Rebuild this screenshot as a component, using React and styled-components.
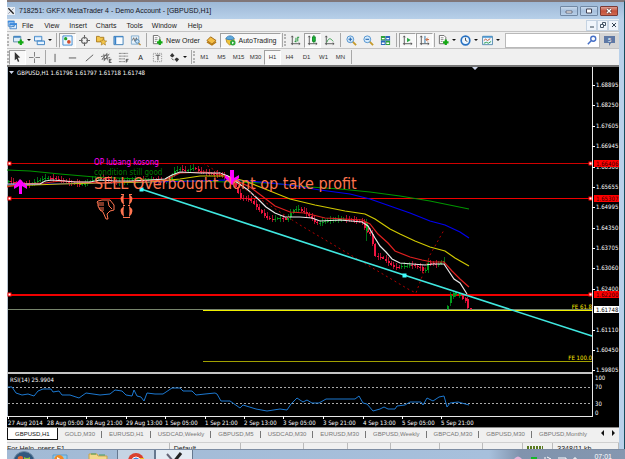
import React from "react";
import styled, { createGlobalStyle } from "styled-components";

const GlobalStyle = createGlobalStyle`
  * {
    box-sizing: border-box;
  }
  body {
    margin: 0;
    background: #fff;
    overflow: hidden;
    font-family: "Liberation Sans", Arial, sans-serif;
    font-size: 7px;
    color: #1b1b1b;
  }
  button {
    font: inherit;
    color: inherit;
    background: none;
    border: 0;
    padding: 0;
    cursor: pointer;
  }
`;
const Desktop = styled.div`
  height: 100vh;
  padding-left: 7px;
  display: flex;
  flex-direction: column;
  overflow: hidden;
`;
const Frame = styled.div`
  flex: none;
  border-top: 2px solid #807678;
  border-right: 1px solid #174c5c;
  background: linear-gradient(#9db8d6, #b9d1ea 18px);
`;
const TitleBar = styled.header`
  height: 17px;
  display: flex;
  align-items: center;
  gap: 4px;
  padding: 0 6px 0 0;
`;
const TitleText = styled.h1`
  flex: 1;
  margin: 0;
  font-size: 7px;
  font-weight: normal;
  white-space: nowrap;
  color: #14141c;
`;
const WindowButtons = styled.div`
  display: flex;
  gap: 2px;
`;
const WindowButton = styled.button`
  width: 18px;
  height: 10px;
  display: grid;
  place-items: center;
  border: 1px solid ${(props) => (props.$close ? "#7c3a35" : "#7188a4")};
  border-radius: 1px;
  background: ${(props) =>
    props.$close
      ? "linear-gradient(#dda094, #c4503a 50%, #cf6a50)"
      : "linear-gradient(#c9daed, #a6bfdc 50%, #b8cfe8)"};
`;
const Client = styled.div`
  margin-right: 5px;
  background: #f0f0f0;
`;
const MenuBar = styled.nav`
  height: 12px;
  display: flex;
  align-items: center;
`;
const MenuItem = styled.button`
  margin-right: ${(props) => props.$gap}px;
`;
const MdiButtons = styled.div`
  display: flex;
  margin-left: auto;
`;
const MdiButton = styled.button`
  width: 11px;
  height: 11px;
  display: grid;
  place-items: center;
  border: 1px solid #c5d3e2;
  background: #f0f5fb;
`;
const Toolbar = styled.div`
  height: 17px;
  display: flex;
  align-items: center;
  border-top: 1px solid #c4c4c4;
  white-space: nowrap;
`;
const Grip = styled.span`
  flex: none;
  width: ${(props) => props.$width}px;
  height: 12px;
  border-left: 2px dotted #b4b4b4;
`;
const Separator = styled.span`
  flex: none;
  width: ${(props) => props.$width || 5}px;
  height: 14px;
  background: linear-gradient(#a8a8a8, #a8a8a8) center / 1px 100% no-repeat;
`;
const ToolButton = styled.button`
  flex: none;
  width: ${(props) => props.$width || 17}px;
  height: 15px;
  display: flex;
  align-items: center;
  justify-content: center;
  gap: 3px;
  border: 1px solid transparent;
  ${(props) =>
    props.$pressed &&
    `
    background: #f8f8f8;
    border-color: #a0a0a0 #fff #fff #a0a0a0;
  `}
`;
const Caret = styled.span`
  border: 2px solid transparent;
  border-top-color: #111;
  border-bottom: 0;
`;
const TimeframeButton = styled(ToolButton)`
  font-size: 6px;
  color: #333;
`;
const SearchBox = styled.label`
  flex: 1;
  min-width: 0;
  height: 15px;
  display: flex;
  align-items: center;
  margin-left: 3px;
  padding-right: 2px;
  border: 1px solid #b9b9b9;
  background: #fff;
`;
const SearchInput = styled.input`
  flex: 1;
  min-width: 0;
  border: 0;
  outline: 0;
  padding: 0 3px;
  font: inherit;
  background: transparent;
`;
const ChatButton = styled(ToolButton)`
  background: #d5d5d5;
`;
const ChartFrame = styled.main`
  border-top: 2px solid #777;
  border-bottom: 1px solid #8a8a8a;
  background: #000;
`;
const ChartSvg = styled.svg`
  display: block;
  width: 100%;
  height: auto;
  font-family: "DejaVu Sans Condensed", "Noto Sans", sans-serif;
  font-size: 6px;
`;
const Tabs = styled.div`
  height: 14px;
  display: flex;
  align-items: flex-start;
  overflow: hidden;
  white-space: nowrap;
  font-size: 6px;
`;
const Tab = styled.button`
  flex: none;
  height: 12px;
  padding: 0 7px;
  ${(props) =>
    props.$active
      ? `
    color: #111;
    background: #fff;
    border: 1px solid #111;
    border-top: 0;
  `
      : `
    color: #777;
    background: linear-gradient(#777, #777) right center / 1px 7px no-repeat;
    &:last-of-type { background: none; }
  `}
`;
const TabArrows = styled.span`
  margin-left: auto;
  padding: 2px 4px 0 0;
`;
const StatusBar = styled.footer`
  height: 7px;
  display: flex;
  overflow: hidden;
  line-height: 8px;
  border-top: 1px solid #d0d0d0;
`;
const StatusCell = styled.span`
  flex: ${(props) => `${props.$size} ${props.$size} ${props.$size}px`};
  min-width: 0;
  padding: 2px 0 0 4px;
  border-right: 1px solid #bbb;
  white-space: nowrap;
  &:first-child {
    padding-left: 0;
  }
`;
const Taskbar = styled.div`
  flex: 1;
  min-height: 0;
  display: flex;
  align-items: flex-start;
  overflow: hidden;
  border-top: 1px solid #7d8da3;
  background: linear-gradient(90deg, #a2bad5, #a7c0dc 78%, #8093ad 83%, #8597b0);
`;
const TaskButton = styled.button`
  flex: none;
  width: ${(props) => props.$width || 38}px;
  height: 20px;
  display: flex;
  justify-content: center;
  ${(props) =>
    props.$open &&
    `
    border: 1px solid #66788f;
    border-top: 0;
    background: ${props.$active ? "#e3ebf3" : "#c5d4e4"};
  `}
`;
const Tray = styled.div`
  margin-left: auto;
  padding-right: 13px;
  display: flex;
  gap: 13px;
  color: #fff;
  line-height: 8px;
`;
const Clock = styled.time`
  padding-top: 3px;
`;

const svgProps = { viewBox: "0 0 12 12", fill: "none", "aria-hidden": true };

function Icon({ children, size = 12 }) {
  return (
    <svg {...svgProps} width={size} height={size}>
      {children}
    </svg>
  );
}

const plus = <path d="M8.5 5v6M5.5 8h6" stroke="#13a813" strokeWidth="2.4" />;
const axes = <path d="M2.5 1v10M1 9.5h10M1.5 2.5l1-1.5 1 1.5M9.5 8.5l1.5 1-1.5 1" stroke="#555" />;
const gold = { fill: "#f3c64d", stroke: "#a97a1c" };

const icons = {
  logo: (
    <>
      <path d="M0 0h12v12H0z" fill="#e9eef4" />
      <path d="M2 2l8 8" stroke="#222" strokeWidth="2" />
      <path d="M10 2L2 10" stroke="#667" />
    </>
  ),
  windows: (
    <>
      <path d="M1.5 1.5h7v6h-7zM3.5 4.5h8v6h-8z" fill="#dcecff" stroke="#3c7fc4" />
      <path d="M1 2h8M3 5h9" stroke="#3c8be0" strokeWidth="2" />
      <path d="M5 9l2-2 1 1 2-2" stroke="#3579b8" />
    </>
  ),
  newChart: (
    <>
      <path d="M.5 1.5h8v6h-8z" fill="#dcecf8" stroke="#5588a4" />
      <path d="M1 2h7" stroke="#4386c4" strokeWidth="2" />
      {plus}
    </>
  ),
  profiles: (
    <>
      <path d="M.5 1.5h8v5h-8zM3.5 6.5h8v4h-8z" fill="#e7f3ff" stroke="#397ebd" />
      <path d="M1 2h7M4 7h7" stroke="#74aee3" />
    </>
  ),
  market: (
    <>
      <path d="M1 1h10v10H1z" fill="#eef8ff" stroke="#3b86ce" />
      <circle cx="4" cy="4" r="1.8" fill="#21a32b" />
      <circle cx="7.5" cy="7.5" r="2" fill="#d14b2c" />
    </>
  ),
  target: (
    <>
      <circle cx="6" cy="6" r="3.3" stroke="#666" strokeWidth="1.2" />
      <path d="M6 0v4M6 8v4M0 6h4M8 6h4" stroke="#666" strokeWidth="1.2" />
    </>
  ),
  folderStar: (
    <>
      <path d="M.5 1.5h3l1 1h4v5h-8z" {...gold} />
      <path d="M8 4l1.1 2.4 2.6.2-2 1.8.7 2.6L8 9.6 5.6 11l.7-2.6-2-1.8 2.6-.2z" {...gold} strokeWidth=".7" />
    </>
  ),
  dataWindow: (
    <>
      <path d="M1 1.5h10v9H1z" fill="#f9fcff" stroke="#3b7db6" />
      <path d="M2.5 2v8" stroke="#3982c8" strokeWidth="2" />
      <path d="M1 2h10" stroke="#3982c8" />
    </>
  ),
  tester: (
    <>
      <path d="M1.5 1h8v9h-8z" fill="#e7f2fb" stroke="#7faacd" />
      <path d="M2.5 6L4 3l1.5 4L7 3l1 3" stroke="#666" />
      <circle cx="8" cy="7" r="2" fill="#cce5fa" stroke="#4b83ad" />
      <path d="M9.5 9l2 2" stroke="#b78328" strokeWidth="1.4" />
    </>
  ),
  newOrder: (
    <>
      <path d="M1.5.5h5l2 2v7h-7z" fill="#fff" stroke="#666" />
      <path d="M3 3h3M3 5h3M3 7h2" stroke="#888" />
      {plus}
    </>
  ),
  book: (
    <>
      <path d="M1 6l4-4 6 4-4.500 4z" fill="#f4be44" stroke="#9c6510" />
      <path d="M1 7.500l5.500 3.500L11 7.500" stroke="#b7790f" strokeWidth="1.4" />
    </>
  ),
  auto: (
    <>
      <path d="M1 4h9l-1 5-4 2-3-3z" fill="#f0c53b" stroke="#bc8d21" />
      <path d="M1 4c1-4 8-4 9 0-2 1.500-7 1.500-9 0z" fill="#5eaadd" stroke="#3c80b8" />
      <circle cx="8.500" cy="8.500" r="3" fill="#2da83b" />
      <path d="M7.700 7l2.300 1.500L7.700 10z" fill="#fff" />
    </>
  ),
  bars: (
    <>
      {axes}
      <path d="M6.500 3v5M5 7h1.500M8.500 2v5M8.500 2.500H10" stroke="#178c2e" />
    </>
  ),
  candles: (
    <>
      {axes}
      <path d="M7.500 0v9" stroke="#118327" />
      <path d="M6 2h3v5H6z" fill="#18b535" stroke="#118327" />
    </>
  ),
  line: (
    <>
      {axes}
      <path d="M3 8c2-5 4-5 7-1" stroke="#2f9a44" />
    </>
  ),
  zoomIn: (
    <>
      <path d="M7 7l4 4" stroke="#c69a2a" strokeWidth="2" />
      <circle cx="4.700" cy="4.700" r="3.700" fill="#d7ebfb" stroke="#4b8fce" />
      <path d="M2.700 4.700h4M4.700 2.700v4" stroke="#2468b0" strokeWidth="1.200" />
    </>
  ),
  zoomOut: (
    <>
      <path d="M7 7l4 4" stroke="#c69a2a" strokeWidth="2" />
      <circle cx="4.700" cy="4.700" r="3.700" fill="#d7ebfb" stroke="#4b8fce" />
      <path d="M2.700 4.700h4" stroke="#2468b0" strokeWidth="1.200" />
    </>
  ),
  tile: (
    <>
      <path d="M1 1h5v5H1zM6 6h5v5H6z" fill="#2fa23a" />
      <path d="M6 1h5v5H6zM1 6h5v5H1z" fill="#2d68bd" />
      <path d="M2 4h3M7 4h3M2 9h3M7 9h3" stroke="#fff" strokeWidth="1.500" />
    </>
  ),
  scroll: (
    <>
      {axes}
      <path d="M5.500 3l4 2.500-4 2.500z" fill="#26a640" />
    </>
  ),
  shift: (
    <>
      {axes}
      <path d="M6.500 1v8" stroke="#246d9f" />
      <path d="M11 5H8M9.500 3L7.500 5l2 2" stroke="#c05020" />
    </>
  ),
  period: (
    <>
      <circle cx="6" cy="6" r="4.700" fill="#eef7ff" stroke="#2872c3" strokeWidth="1.800" />
      <path d="M6 3v3l2 1" stroke="#444" />
    </>
  ),
  template: (
    <>
      <path d="M.500 1.500h11v9H.500z" fill="#e8f5ff" stroke="#5689ad" />
      <path d="M1 2h10" stroke="#4e95cc" strokeWidth="2" />
      <path d="M2 6l2-1.500L6 6l3-2" stroke="#c65730" />
      <path d="M2 9l3-1 2 1 3-2" stroke="#259b45" />
    </>
  ),
  search: (
    <>
      <circle cx="7.500" cy="4.500" r="3" stroke="#456fc6" strokeWidth="1.600" />
      <path d="M5 7l-4 4" stroke="#456fc6" strokeWidth="1.800" />
    </>
  ),
  pointer: <path d="M3 0l6 6-2.700.300L8 10l-1.500.800L5 7.300 3 9z" fill="#333" />,
  cross: <path d="M6 0v5M6 7v5M0 6h5M7 6h5" stroke="#777" />,
  vline: <path d="M5.500 2v9" stroke="#555" />,
  hline: <path d="M2 6.500h8" stroke="#555" />,
  trend: <path d="M2 10l8-7" stroke="#555" />,
  channel: (
    <>
      <path d="M1 8l6-7M3 10l6-8M0 5l8-2M1 8l9-2M3 2l1 7M6 2l1 7" stroke="#555" strokeWidth=".800" />
      <path d="M11.500 8H9v3.500h2.500M9 9.700h2" stroke="#222" strokeWidth=".800" />
    </>
  ),
  fibo: (
    <>
      <path d="M1 1.500h10M1 4.500h10M1 7.500h7M1 10.500h7" stroke="#666" strokeDasharray="1 .4" />
      <path d="M11.500 8H9v3.500M9 9.700h2" stroke="#222" strokeWidth=".800" />
    </>
  ),
  label: (
    <>
      <path d="M1.500 1.500h9v9h-9z" stroke="#888" strokeDasharray="1 1" />
      <path d="M4 3.500h5M6.500 3.500V9" stroke="#444" />
    </>
  ),
  arrows: (
    <>
      <path d="M1 4l2.500-3L6 4 3.500 6z" fill="#333" />
      <path d="M6 8l2.500-2L11 8l-2.500 3z" fill="#333" />
      <path d="M3 7l2 2" stroke="#333" />
    </>
  ),
};

const PRICE_LABELS = [
  ["1.68895", 85], ["1.68250", 105], ["1.67605", 126], ["1.66945", 146],
  ["1.66300", 167], ["1.65655", 187], ["1.64995", 207], ["1.64350", 228],
  ["1.63705", 248], ["1.63060", 268], ["1.62400", 289], ["1.61110", 330],
  ["1.60450", 350], ["1.59805", 370],
];
const DATES = [
  ["27 Aug 2014", 8], ["28 Aug 05:00", 47], ["28 Aug 21:00", 86],
  ["29 Aug 13:00", 126], ["1 Sep 05:00", 165], ["1 Sep 21:00", 205],
  ["2 Sep 13:00", 244], ["3 Sep 05:00", 283], ["3 Sep 21:00", 323],
  ["4 Sep 13:00", 363], ["5 Sep 05:00", 402], ["5 Sep 21:00", 441],
];
const LINES = [
  ["#009400", "7,170 30,171 60,174 95,177 140,179 190,181 230,182 270,183 310,187 340,189 370,192 400,196 430,201 469,209"],
  ["#0000f0", "7,185 50,184 100,183 150,182 200,181 225,180 250,181 290,185 320,190 350,194 370,199 390,206 410,213 430,221 445,225 460,232 469,238"],
  ["#d0c800", "7,186 60,184 100,183 150,182 180,179 200,176 225,176 245,181 265,189 290,199 315,205 345,211 365,214 375,219 390,229 400,234 415,241 430,247 445,251 455,258 469,266"],
  ["#e02020", "7,187 20,184 45,183 60,181 100,183 165,180 180,173 205,172 225,175 235,180 250,187 262,196 275,206 290,212 305,213 325,218 345,219 362,220 370,224 378,234 388,243 395,251 410,257 422,260 432,262 444,262 452,271 460,279 469,287"],
  ["#e8e8e8", "7,184 40,184 45,181 52,180 65,181 75,182 90,182 100,180 115,181 130,181 150,180 165,179 172,175 180,172 200,173 220,173 228,176 238,183 248,190 258,199 266,207 275,213 285,217 300,217 312,218 320,221 340,220 362,222 368,226 375,238 380,246 386,252 392,259 400,263 412,264 425,265 433,264 444,264 448,270 454,279 460,283 467,294"],
];
const RSI =
  "8,387 12,387 16,393 22,395 28,394 34,396 38,391 43,389 51,389 53,392 59,391 62,395 70,395 79,398 86,393 100,395 110,394 115,390 122,391 126,395 132,396 134,390 137,396 141,397 144,401 147,393 155,394 163,394 172,388 180,388 183,391 192,391 196,395 205,394 215,393 217,394 221,401 230,401 240,408 243,405 256,409 267,411 280,409 287,410 291,404 297,398 303,402 307,400 312,403 319,403 326,399 340,399 355,399 359,396 363,403 367,404 373,411 380,409 384,407 388,409 395,409 397,406 405,405 410,402 421,402 423,405 427,398 433,401 439,397 444,396 447,407 450,403 458,402 469,405";
const CLOSES = [
  [8, 181], [20, 182], [30, 184], [42, 180], [55, 179], [68, 181], [85, 184],
  [100, 179], [115, 181], [130, 180], [145, 182], [160, 180], [168, 179],
  [174, 170], [179, 168], [186, 172], [192, 169], [200, 173], [218, 173],
  [230, 178], [236, 190], [240, 199], [250, 201], [262, 213], [268, 217],
  [282, 218], [286, 221], [292, 212], [298, 210], [308, 215], [316, 222],
  [326, 220], [362, 221], [366, 230], [371, 233], [374, 255], [382, 258],
  [392, 268], [398, 268], [411, 264], [420, 266], [424, 272], [428, 262],
  [436, 266], [444, 262],
];
const LAST_CANDLES = [
  [447, 306, 309, 305, 310, true], [450, 295, 303, 292, 306, true],
  [453, 293, 297, 292, 299, true], [455, 292, 295, 291, 297, true],
  [459, 293, 296, 292, 298, true], [462, 295, 299, 294, 300, false],
  [465, 298, 301, 297, 303, false], [467, 299, 308, 297, 309, false],
  [470, 308, 309, 308, 310, false],
];

function closeAt(x) {
  const i = CLOSES.findIndex((p) => p[0] >= x);
  if (i <= 0) return CLOSES[0][1];
  const [x0, y0] = CLOSES[i - 1];
  const [x1, y1] = CLOSES[i];
  return y0 + ((y1 - y0) * (x - x0)) / (x1 - x0);
}

// [x, bodyTop, bodyBottom, high, low, up]
function buildCandles() {
  const list = [];
  let open = 182;
  for (let i = 0; i < 166; i++) {
    const x = 8 + i * 2.64;
    const close = closeAt(x) + Math.sin(i * 12.9) * 1.5;
    const wick = 1 + Math.abs(Math.sin(i * 7.3)) * 3;
    const top = Math.min(open, close);
    const bottom = Math.max(open, close, top + 1);
    list.push([x, top, bottom, top - wick, bottom + wick / 1.5, close < open]);
    open = close;
  }
  list.push([366, 222, 231, 219, 241, true]);
  return list.concat(LAST_CANDLES);
}

function Candles() {
  return buildCandles().map(([x, top, bottom, high, low, up], i) => (
    <g key={i} fill={up ? "#009c1c" : "#f01440"} shapeRendering="crispEdges">
      <rect x={x} y={high} width="1" height={low - high} opacity=".7" />
      <rect x={x - 0.5} y={top} width="2" height={bottom - top} />
    </g>
  ));
}

function PriceTag({ y, fill, color, children }) {
  return (
    <>
      <rect x="594" y={y - 3} width="25" height="7" fill={fill} />
      <text x="596" y={y + 3} fill={color}>{children}</text>
    </>
  );
}

function Chart() {
  return (
    <ChartSvg viewBox="7 67 612 360" role="img" aria-label="GBPUSD,H1 chart">
      <path d="M7.500 67v350" stroke="#b8c4d0" />
      <path d="M9 71h5l-2.500 3zM472 67h6l-3 3z" fill="#ccd4e8" />
      <text x="17" y="75" fill="#fff">GBPUSD,H1 1.61796 1.61797 1.61718 1.61748</text>
      <g>
        <rect x="8" y="163" width="584" height="1" fill="#d00000" />
        <rect x="8" y="198" width="584" height="1" fill="#f00000" />
        <rect x="8" y="294" width="584" height="2" fill="#f00000" />
        <rect x="8" y="309" width="584" height="1" fill="#77856c" />
        <rect x="203" y="310" width="389" height="1" fill="#f0f000" />
        <rect x="203" y="361" width="389" height="1" fill="#a0a000" />
      </g>
      <g fill="#ffeb00" textAnchor="end">
        <text x="592" y="309">FE 61.8</text>
        <text x="592" y="360">FE 100.0</text>
      </g>
      <Candles />
      <g fill="none">
        {LINES.map(([stroke, points]) => (
          <polyline key={stroke} points={points} stroke={stroke} strokeWidth="1.200" />
        ))}
        <path d="M203 163l37 23 60 39 108 64 8 4 14-38 14-25" stroke="#b00000" strokeDasharray="2 3" />
        <path d="M141 189l263 86 188 61" stroke="#40e8e0" strokeWidth="1.600" />
      </g>
      <path d="M139.500 187.500h4v4h-4zM402.500 273.500h4v4h-4z" fill="#40ffff" />
      <g fill="#ff00ff">
        <path d="M20 179l7 7v3l-5-3v8h-3v-8l-5 3v-3z" />
        <path d="M232 185l-7-7v-3l5 3v-8h4v8l5-3v3z" />
      </g>
      <text x="94" y="165" fontSize="8" fill="#ff00ff">OP lubang kosong</text>
      <text x="94" y="175" fontSize="8" fill="#007800">condition still good</text>
      <text x="94" y="189" fontSize="16" fill="#ff7550">SELL Overbought dont op take profit</text>
      <path
        d="M98 201l4-1h8l4 5v5l-4 1-3 3 1 5h-2l-3-7-3-2-1-2-1-2 0-2-1-2z M98 203h6M98 205h6M99 208h5M100 210h4M108 201l1 5 3 3"
        stroke="#ff7550"
        fill="none"
      />
      <g fill="#ff7550">
        <path d="M124 194q-7 5 0 11q-1-6 0-11zM129 194q7 5 0 11q1-6 0-11z" />
        <path d="M124 206q-7 5 0 11q-1-6 0-11zM129 206q7 5 0 11q1-6 0-11z" />
        <path d="M121 194h3v1h-3zM129 194h3v1h-3zM123 217h7v1h-7zM123 205h2v1h-2zM128 205h2v1h-2z" />
      </g>
      {[163, 198, 294].map((y) => (
        <g key={y} fill="#fff" stroke="#f00">
          <rect x="8" y={y - 1} width="3" height="3" />
          <rect x="589" y={y - 1} width="3" height="3" />
        </g>
      ))}
      <path d="M7 372h585v2H7z" fill="#c4c4c4" />
      <text x="10" y="382" fill="#fff">RSI(14) 25.9904</text>
      <path d="M8 387.500h584M8 403.500h584" stroke="#aaa" strokeDasharray="2 2" />
      <polyline points={RSI} fill="none" stroke="#1c78d0" />
      <path d="M592.500 67v350M7 416.500h586" stroke="#e8e8e8" shapeRendering="crispEdges" />
      <g fill="#fff">
        {PRICE_LABELS.map(([label, y]) => (
          <React.Fragment key={label}>
            <rect x="592" y={y} width="3" height="1" />
            <text x="596" y={y + 2}>{label}</text>
          </React.Fragment>
        ))}
        <text x="595" y="380">100</text>
        <text x="595" y="389">70</text>
        <text x="595" y="406">30</text>
        <text x="595" y="415">0</text>
        {DATES.map(([label, x]) => (
          <React.Fragment key={label}>
            <rect x={x} y="416" width="1" height="3" />
            <text x={x} y="425">{label}</text>
          </React.Fragment>
        ))}
      </g>
      <PriceTag y={163} fill="#f00" color="#300">1.66406</PriceTag>
      <PriceTag y={198} fill="#f00" color="#300">1.65307</PriceTag>
      <PriceTag y={294} fill="#f00" color="#300">1.62200</PriceTag>
      <PriceTag y={309} fill="#fff" color="#000">1.61748</PriceTag>
    </ChartSvg>
  );
}

const MENU = [
  ["File", 11], ["View", 10], ["Insert", 9], ["Charts", 10],
  ["Tools", 9], ["Window", 11], ["Help", 0],
];
const TIMEFRAMES = ["M1", "M5", "M15", "M30", "H1", "H4", "D1", "W1", "MN"];
const TABS = [
  "GBPUSD,H1", "GOLD,M30", "EURUSD,H1", "USDCAD,Weekly", "GBPUSD,M5",
  "USDCAD,M30", "EURUSD,M30", "GBPUSD,Weekly", "GBPCAD,M30", "GBPUSD,M30",
  "GBPUSD,Monthly",
];

function Tool({ icon, label, width, pressed, caret, children }) {
  return (
    <ToolButton aria-label={label} $width={width} $pressed={pressed}>
      <Icon size={11}>{icons[icon]}</Icon>
      {children}
      {caret && <Caret />}
    </ToolButton>
  );
}

function App() {
  return (
    <Desktop>
      <GlobalStyle />
      <Frame>
        <TitleBar>
          <Icon size={8}>{icons.logo}</Icon>
          <TitleText>718251: GKFX MetaTrader 4 - Demo Account - [GBPUSD,H1]</TitleText>
          <WindowButtons>
            <WindowButton aria-label="Minimize">
              <svg width="8" height="6"><path d="M1 3h6v2H1z" fill="#fff" stroke="#445" strokeWidth=".7" /></svg>
            </WindowButton>
            <WindowButton aria-label="Restore">
              <svg width="8" height="6"><path d="M1.500 1h5v4h-5z" fill="#fff" stroke="#445" /></svg>
            </WindowButton>
            <WindowButton aria-label="Close" $close>
              <svg width="8" height="6"><path d="M2 1l4 4M6 1L2 5" stroke="#533" strokeWidth="2.600" /><path d="M2 1l4 4M6 1L2 5" stroke="#fff" strokeWidth="1.400" /></svg>
            </WindowButton>
          </WindowButtons>
        </TitleBar>
        <Client>
          <MenuBar>
            <MenuItem $gap={5} aria-label="Chart window">
              <Icon size={10}>{icons.windows}</Icon>
            </MenuItem>
            {MENU.map(([label, gap]) => (
              <MenuItem key={label} $gap={gap}>{label}</MenuItem>
            ))}
            <MdiButtons>
              <MdiButton aria-label="Minimize chart">
                <svg width="6" height="6"><path d="M1 5h4" stroke="#345" /></svg>
              </MdiButton>
              <MdiButton aria-label="Restore chart">
                <svg width="6" height="6" fill="none" stroke="#456"><path d="M2.500 2V.500h3v3H4M.500 2.500h3v3h-3z" /></svg>
              </MdiButton>
              <MdiButton aria-label="Close chart">
                <svg width="6" height="6"><path d="M1 1l4 4M5 1L1 5" stroke="#345" /></svg>
              </MdiButton>
            </MdiButtons>
          </MenuBar>
          <Toolbar>
            <Grip $width={4} />
            <Tool icon="newChart" label="New chart" width={21} caret />
            <Tool icon="profiles" label="Profiles" width={22} caret />
            <Separator />
            <Tool icon="market" label="Market Watch" pressed />
            <Tool icon="target" label="Navigator cross" />
            <Tool icon="folderStar" label="Navigator" />
            <Tool icon="dataWindow" label="Terminal" />
            <Tool icon="tester" label="Strategy Tester" />
            <Separator />
            <Tool icon="newOrder" width={54}>New Order</Tool>
            <Tool icon="book" label="MetaEditor" />
            <Tool icon="auto" width={61} pressed>AutoTrading</Tool>
            <Separator $width={3} />
            <Grip $width={3} />
            <Tool icon="bars" label="Bar chart" />
            <Tool icon="candles" label="Candlesticks" pressed />
            <Tool icon="line" label="Line chart" />
            <Separator />
            <Tool icon="zoomIn" label="Zoom in" />
            <Tool icon="zoomOut" label="Zoom out" />
            <Tool icon="tile" label="Tile windows" />
            <Separator />
            <Tool icon="scroll" label="Auto scroll" pressed />
            <Tool icon="shift" label="Chart shift" pressed />
            <Separator $width={3} />
            <Tool icon="newOrder" label="Indicators" width={22} caret />
            <Tool icon="period" label="Periods" width={22} caret />
            <Tool icon="template" label="Templates" width={22} caret />
            <SearchBox>
              <SearchInput type="text" aria-label="Search" />
              <Icon size={10}>{icons.search}</Icon>
            </SearchBox>
            <ChatButton aria-label="Messages" $width={19}>
              <svg width="11" height="11">
                <path d="M0 1h11v7H7l-2 3V8H0z" fill="#5e78a5" />
                <text x="4" y="7" fontSize="6" fill="#fff">5</text>
              </svg>
            </ChatButton>
          </Toolbar>
          <Toolbar>
            <Grip $width={2} />
            <Tool icon="pointer" label="Cursor" pressed />
            <Tool icon="cross" label="Crosshair" />
            <Separator $width={4} />
            <Tool icon="vline" label="Vertical line" />
            <Tool icon="hline" label="Horizontal line" />
            <Tool icon="trend" label="Trendline" />
            <Tool icon="channel" label="Channel" />
            <Tool icon="fibo" label="Fibonacci" />
            <ToolButton>A</ToolButton>
            <Tool icon="label" label="Text label" />
            <Tool icon="arrows" label="Arrows" width={24} caret />
            <Separator $width={3} />
            <Grip $width={3} />
            {TIMEFRAMES.map((label) => (
              <TimeframeButton key={label} $pressed={label === "H1"}>{label}</TimeframeButton>
            ))}
            <Separator />
          </Toolbar>
          <ChartFrame>
            <Chart />
          </ChartFrame>
          <Tabs>
            {TABS.map((label, i) => (
              <Tab key={label} $active={i === 0}>{label}</Tab>
            ))}
            <TabArrows>
              <svg width="14" height="6"><path d="M3 0v6L0 3zM11 0v6l3-3z" fill="#111" /></svg>
            </TabArrows>
          </Tabs>
          <StatusBar>
            <StatusCell $size={165}>For Help, press F1</StatusCell>
            <StatusCell $size={72}>Default</StatusCell>
            <StatusCell $size={63} />
            <StatusCell $size={44} />
            <StatusCell $size={43} />
            <StatusCell $size={49} />
            <StatusCell $size={43} />
            <StatusCell $size={41} />
            <StatusCell $size={30}>
              <svg width="16" height="5"><path d="M0 2.500h16" stroke="#5a7a20" strokeWidth="5" strokeDasharray="2 1" /></svg>
            </StatusCell>
            <StatusCell $size={66}>3348/11 kb</StatusCell>
          </StatusBar>
        </Client>
      </Frame>
      <Taskbar>
        <TaskButton aria-label="Start" $width={34}>
          <svg width="24" height="20"><circle cx="12" cy="12" r="10.500" fill="#30577d" stroke="#6f8aa5" /><path d="M6 7q3-2 5 0v5H5z" fill="#e8642c" /><path d="M12 7q3 2 6 0v5h-6z" fill="#8fc23c" /></svg>
        </TaskButton>
        <TaskButton aria-label="Media Player">
          <svg width="18" height="20"><path d="M2 5h14v12H2z" fill="#8ec8ec" stroke="#5a9dcc" /><circle cx="8" cy="10" r="5" fill="#f18a24" /><path d="M6 7l5 3-5 3z" fill="#fff" /></svg>
        </TaskButton>
        <TaskButton aria-label="Explorer">
          <svg width="20" height="20"><path d="M1 4h8l1 2h9v12H1z" fill="#f2d98c" stroke="#c9a34c" /><path d="M3 4h5M11 5h6" stroke="#4a9f5a" /></svg>
        </TaskButton>
        <TaskButton aria-label="Chrome" $open>
          <svg width="18" height="20"><circle cx="9" cy="11" r="8" fill="#d9402f" /><path d="M1 10l8 1-3 8q-5-3-5-9z" fill="#2f9e45" /><path d="M9 8h8q1 9-7 11z" fill="#f3c622" /><circle cx="9" cy="11" r="4" fill="#3d83e0" stroke="#fff" /></svg>
        </TaskButton>
        <TaskButton aria-label="MetaTrader" $open $active>
          <svg width="18" height="20"><path d="M2 4l12 14" stroke="#667" strokeWidth="2" /><path d="M16 3L4 18" stroke="#222" strokeWidth="3" /></svg>
        </TaskButton>
        <Tray>
          <svg width="68" height="10"><path d="M1 9q4-5 8 0z" fill="#e6b4d8" /><path d="M18 7h6v3h-6z" fill="#12b82a" /><path d="M32 7v3M34 7l4 2M45 8h8v2M62 7v3M60 9h4" stroke="#fff" fill="none" /></svg>
          <Clock>07:01</Clock>
        </Tray>
      </Taskbar>
    </Desktop>
  );
}

export default App;
